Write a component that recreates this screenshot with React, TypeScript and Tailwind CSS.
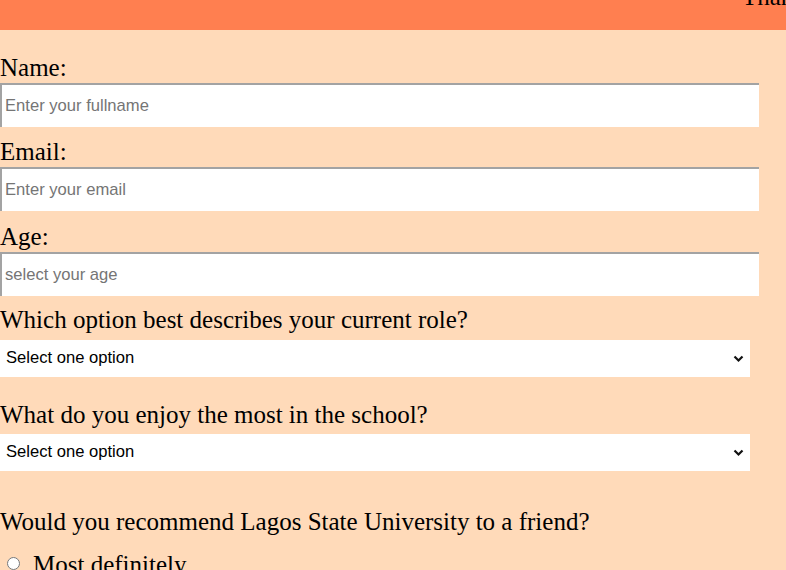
import React from 'react'

const serif = { fontFamily: '"Liberation Serif", "Times New Roman", serif' }

function Label({ children, className = '' }: { children: React.ReactNode; className?: string }) {
  return (
    <label className={`block text-[25px] leading-[28px] text-black ${className}`} style={serif}>
      {children}
    </label>
  )
}

function TextInput({ placeholder }: { placeholder: string }) {
  return (
    <input
      placeholder={placeholder}
      className="block w-[759px] h-[44px] bg-white border-t-2 border-l-2 border-[#a3a3a3] pl-[3px] text-[16.6px] text-black placeholder:text-[#757575] outline-none font-['Liberation_Sans',Arial,sans-serif]"
    />
  )
}

function Select() {
  return (
    <div className="relative w-[750px] h-[37px] bg-white">
      <select className="w-full h-full appearance-none bg-white pl-[6px] text-[16.6px] text-black outline-none font-['Liberation_Sans',Arial,sans-serif]">
        <option>Select one option</option>
      </select>
      <svg className="absolute right-[6px] top-[15px] pointer-events-none" width="11" height="8" viewBox="0 0 11 8">
        <path d="M1.5 1.5 L5.5 5.5 L9.5 1.5" fill="none" stroke="#111" strokeWidth="2.2" />
      </svg>
    </div>
  )
}

export default function App() {
  return (
    <div className="w-[786px] h-[570px] overflow-hidden bg-[#ffdab9]">
      {/* Header */}
      <div className="h-[30px] bg-[#ff7f50] overflow-hidden">
        <p className="pl-[742px] mt-[-17px] text-[25px] leading-[28px] whitespace-nowrap text-black" style={serif}>
          Thank you for taking the survey
        </p>
      </div>

      <form className="pt-[24px]">
        <Label>Name:</Label>
        <div className="mt-[1px]">
          <TextInput placeholder="Enter your fullname" />
        </div>

        <Label className="mt-[11px]">Email:</Label>
        <div className="mt-[1px]">
          <TextInput placeholder="Enter your email" />
        </div>

        <Label className="mt-[12px]">Age:</Label>
        <div className="mt-[1px]">
          <TextInput placeholder="select your age" />
        </div>

        <Label className="mt-[10px]">Which option best describes your current role?</Label>
        <div className="mt-[6px]">
          <Select />
        </div>

        <Label className="mt-[24px]">What do you enjoy the most in the school?</Label>
        <div className="mt-[5px]">
          <Select />
        </div>

        <Label className="mt-[37px]">Would you recommend Lagos State University to a friend?</Label>
        <div className="mt-[15px] flex items-start">
          <input type="radio" name="rec" className="ml-[7px] mr-[13px] mt-[6px] w-[13px] h-[13px]" />
          <span className="text-[25px] leading-[28px]" style={serif}>Most definitely</span>
        </div>
      </form>
    </div>
  )
}
